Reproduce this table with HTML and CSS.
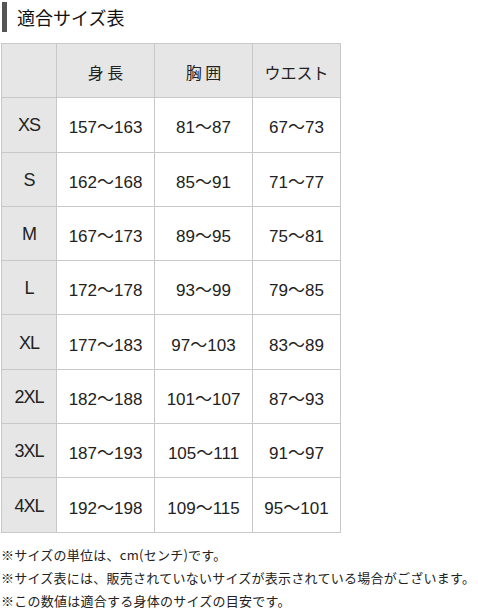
FILE: index.html
```html
<!DOCTYPE html>
<html lang="ja">
<head>
<meta charset="utf-8">
<link rel="stylesheet" href="styles.css">
</head>
<body>
<h2 class="title">適合サイズ表</h2>
<table class="size-table">
  <thead>
    <tr><th class="corner"></th><th>身 長</th><th>胸 囲</th><th>ウエスト</th></tr>
  </thead>
  <tbody>
    <tr><th>XS</th><td>157～163</td><td>81～87</td><td>67～73</td></tr>
    <tr><th>S</th><td>162～168</td><td>85～91</td><td>71～77</td></tr>
    <tr><th>M</th><td>167～173</td><td>89～95</td><td>75～81</td></tr>
    <tr><th>L</th><td>172～178</td><td>93～99</td><td>79～85</td></tr>
    <tr><th>XL</th><td>177～183</td><td>97～103</td><td>83～89</td></tr>
    <tr><th>2XL</th><td>182～188</td><td>101～107</td><td>87～93</td></tr>
    <tr><th>3XL</th><td>187～193</td><td>105～111</td><td>91～97</td></tr>
    <tr><th>4XL</th><td>192～198</td><td>109～115</td><td>95～101</td></tr>
  </tbody>
</table>
<div class="notes">
  <p>※サイズの単位は、cm(センチ)です。</p>
  <p>※サイズ表には、販売されていないサイズが表示されている場合がございます。</p>
  <p>※この数値は適合する身体のサイズの目安です。</p>
</div>
</body>
</html>
```
FILE: styles.css
```css
html, body {
  margin: 0;
  padding: 0;
  background: #fff;
}
body {
  font-family: "Liberation Sans", "Noto Sans CJK JP", sans-serif;
  color: #222;
  padding: 2px 0 0 1px;
}
.title {
  margin: 0 0 11px 1px;
  padding: 0 0 0 10px;
  border-left: 5px solid #555;
  font-family: "Noto Sans CJK JP", sans-serif;
  font-weight: normal;
  font-size: 18px;
  line-height: 30px;
  height: 30px;
  color: #111;
}
.size-table {
  border-collapse: collapse;
  border: 1px solid #c8c8c8;
}
.size-table th,
.size-table td {
  border: 1px solid #c8c8c8;
  height: 51.3px;
  padding: 2px 0 0;
  text-align: center;
  font-weight: normal;
  font-size: 17px;
  color: #222;
}
.size-table thead th {
  background: #e6e6e6;
  font-family: "Noto Sans CJK JP", sans-serif;
  font-size: 16px;
  width: 97px;
}
.size-table thead th.corner {
  width: 54px;
}
.size-table thead th:last-child {
  width: 87px;
}
.size-table tbody th {
  background: #e6e6e6;
  letter-spacing: -1px;
  font-size: 18px;
}
.size-table td {
  background: #fff;
}
.notes {
  margin-top: 10px;
  font-family: "Noto Sans CJK JP", sans-serif;
  font-size: 13px;
  letter-spacing: 0.25px;
  color: #222;
}
.notes p {
  margin: 0;
  line-height: 23px;
  white-space: nowrap;
}
```
